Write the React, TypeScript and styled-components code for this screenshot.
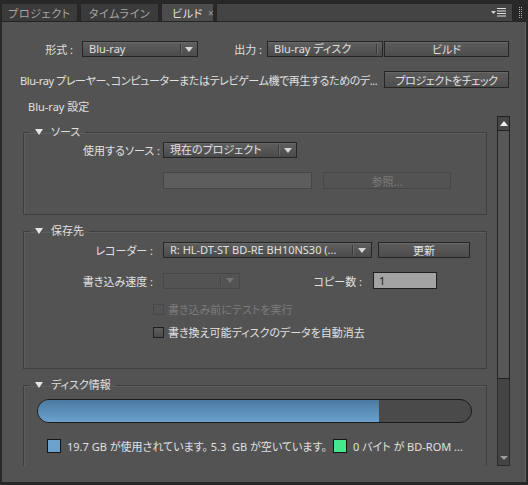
import React from 'react';
import styled, { createGlobalStyle } from 'styled-components';

const GlobalStyle = createGlobalStyle`
  html, body {
    margin: 0;
    padding: 0;
    background: #282828;
  }
  body {
    font-family: "Noto Sans", "Noto Sans CJK JP", sans-serif;
    font-size: 11px;
    font-feature-settings: "palt" 1;
    color: #e0e0e0;
  }
  * {
    box-sizing: border-box;
  }
`;

const Frame = styled.div`
  width: 528px;
  height: 485px;
  display: flex;
  flex-direction: column;
  background: #282828;
  overflow: hidden;
`;

const TabBar = styled.div`
  height: 22px;
  display: flex;
  align-items: flex-end;
  gap: 2px;
  padding-left: 1px;
  border-bottom: 1px solid #252525;
`;

const Tab = styled.div<{ $w: number; $active?: boolean }>`
  width: ${p => p.$w}px;
  height: 18px;
  display: flex;
  align-items: center;
  justify-content: ${p => (p.$active ? 'flex-start' : 'center')};
  padding-left: ${p => (p.$active ? '3px' : '0')};
  gap: 4px;
  background: ${p => (p.$active ? '#4c4c4c' : '#3b3b3b')};
  border: 1px solid #262626;
  border-bottom: none;
  color: ${p => (p.$active ? '#e2e2e2' : '#a6a6a6')};
  letter-spacing: 0.6px;
  white-space: nowrap;
`;

const TabFill = styled.div`
  flex: 1;
  height: 18px;
  display: flex;
  align-items: center;
  justify-content: flex-end;
  padding-right: 6px;
  background: #444444;
  border: 1px solid #262626;
  border-bottom: none;
`;

const Grip = styled.div`
  width: 12px;
  height: 18px;
  display: flex;
  align-items: center;
  justify-content: center;
  margin-right: 1px;
`;

const Close = styled.span`
  color: #9a9a9a;
  font-size: 10px;
  margin-left: 1px;
`;

const Body = styled.div`
  flex: 1;
  margin: 0 2px 3px 2px;
  background: #535353;
  border-right: 1px solid #626262;
  display: flex;
  flex-direction: column;
  padding-left: 18px;
`;

const Row = styled.div<{ $mt: number; $h: number }>`
  display: flex;
  align-items: center;
  margin-top: ${p => p.$mt}px;
  height: ${p => p.$h}px;
  flex-shrink: 0;
`;

const Label = styled.span<{ $w: number; $ml?: number; $mr: number; $dim?: boolean }>`
  width: ${p => p.$w}px;
  margin-left: ${p => p.$ml || 0}px;
  margin-right: ${p => p.$mr}px;
  text-align: right;
  white-space: nowrap;
  flex-shrink: 0;
  color: ${p => (p.$dim ? '#7c7c7c' : '#e0e0e0')};
`;

const SelectBox = styled.div<{ $w: number; $disabled?: boolean }>`
  width: ${p => p.$w}px;
  height: 16px;
  flex-shrink: 0;
  display: flex;
  align-items: stretch;
  border: 1px solid ${p => (p.$disabled ? '#474747' : '#262626')};
  background: ${p => (p.$disabled ? '#535353' : 'linear-gradient(#5f5f5f, #4b4b4b)')};
  box-shadow: ${p => (p.$disabled ? 'none' : 'inset 0 1px 0 #676767')};
  color: #e0e0e0;
`;

const SelectText = styled.span`
  flex: 1;
  padding-left: 6px;
  overflow: hidden;
  white-space: nowrap;
  line-height: 14px;
`;

const SelectArrow = styled.span<{ $w: number; $disabled?: boolean }>`
  width: ${p => p.$w}px;
  flex-shrink: 0;
  display: flex;
  align-items: center;
  justify-content: center;
  border-left: 1px solid ${p => (p.$disabled ? '#464646' : '#3a3a3a')};
  box-shadow: inset 1px 0 0 ${p => (p.$disabled ? '#5a5a5a' : '#6a6a6a')};
  margin: 2px 0;
`;

const Caret = styled.span<{ $disabled?: boolean }>`
  width: 0;
  height: 0;
  border-left: 4px solid transparent;
  border-right: 4px solid transparent;
  border-top: 5px solid ${p => (p.$disabled ? '#747474' : '#d6d6d6')};
`;

const Button = styled.div<{ $w: number; $h: number; $ml?: number; $disabled?: boolean; $tight?: boolean }>`
  width: ${p => p.$w}px;
  height: ${p => p.$h}px;
  margin-left: ${p => p.$ml || 0}px;
  flex-shrink: 0;
  display: flex;
  align-items: center;
  justify-content: center;
  border: 1px solid ${p => (p.$disabled ? '#474747' : '#262626')};
  background: ${p => (p.$disabled ? '#535353' : 'linear-gradient(#5c5c5c, #4d4d4d)')};
  box-shadow: ${p => (p.$disabled ? 'none' : 'inset 0 1px 0 #686868')};
  color: ${p => (p.$disabled ? '#7a7a7a' : '#e2e2e2')};
  letter-spacing: ${p => (p.$tight ? '-0.4px' : '0')};
  white-space: nowrap;
  overflow: hidden;
`;

const Description = styled.span`
  width: 364px;
  flex-shrink: 0;
  white-space: nowrap;
  letter-spacing: -0.4px;
`;

const SettingsTitle = styled.div`
  margin-top: 12px;
  padding-left: 8px;
  line-height: 14px;
  height: 14px;
  flex-shrink: 0;
`;

const ScrollArea = styled.div`
  margin-top: 2px;
  height: 350px;
  flex-shrink: 0;
  display: flex;
  padding-left: 3px;
  gap: 10px;
  overflow: hidden;
`;

const Content = styled.div`
  width: 464px;
  padding-top: 9px;
  display: flex;
  flex-direction: column;
  gap: 9px;
`;

const Group = styled.fieldset<{ $pb: number }>`
  margin: 0;
  padding: 0 0 ${p => p.$pb}px 0;
  min-width: 0;
  border: 1px solid #3e3e3e;
  box-shadow: inset 1px 1px 0 #5e5e5e;
`;

const Legend = styled.legend`
  margin-left: 6px;
  padding: 0 5px;
  line-height: 14px;
  height: 14px;
  display: flex;
  align-items: center;
  gap: 8px;
`;

const LegendCaret = styled.span`
  width: 0;
  height: 0;
  border-left: 4px solid transparent;
  border-right: 4px solid transparent;
  border-top: 6px solid #e6e6e6;
`;

const TextField = styled.div<{ $w: number; $ml: number }>`
  width: ${p => p.$w}px;
  height: 17px;
  margin-left: ${p => p.$ml}px;
  flex-shrink: 0;
  background: #5d5d5d;
  border: 1px solid #464646;
`;

const NumberField = styled.div`
  width: 64px;
  height: 17px;
  flex-shrink: 0;
  background: #a3a3a3;
  border: 1px solid #1f1f1f;
  color: #1a1a1a;
  padding-left: 5px;
  line-height: 15px;
`;

const CheckRow = styled.label<{ $dim?: boolean }>`
  display: flex;
  align-items: center;
  gap: 4px;
  margin-left: 129px;
  color: ${p => (p.$dim ? '#7c7c7c' : '#e0e0e0')};
  white-space: nowrap;
`;

const CheckSquare = styled.span<{ $dim?: boolean }>`
  width: 11px;
  height: 11px;
  flex-shrink: 0;
  border: 1px solid ${p => (p.$dim ? '#474747' : '#1f1f1f')};
  background: ${p => (p.$dim ? '#535353' : 'linear-gradient(#5e5e5e, #4a4a4a)')};
`;

const Meter = styled.div`
  width: 435px;
  height: 24px;
  margin: 7px 0 0 13px;
  border: 1px solid #1b1b1b;
  border-radius: 12px;
  background: #4a4a4a;
  overflow: hidden;
  display: flex;
`;

const MeterFill = styled.div`
  height: 100%;
  background: linear-gradient(#4b7aa1, #6aa1cd);
`;

const KeyRow = styled.div`
  margin: 16px 0 0 23px;
  height: 14px;
  display: flex;
  align-items: center;
  white-space: nowrap;
`;

const KeyText = styled.span`
  white-space: pre;
`;

const Swatch = styled.span<{ $color: string; $ml?: number }>`
  width: 14px;
  height: 14px;
  flex-shrink: 0;
  margin-left: ${p => p.$ml || 0}px;
  margin-right: 6px;
  background: ${p => p.$color};
  border: 1px solid #151515;
`;

const ScrollBar = styled.div`
  width: 13px;
  flex-shrink: 0;
  display: flex;
  flex-direction: column;
`;

const ScrollButton = styled.div`
  height: 15px;
  display: flex;
  align-items: center;
  justify-content: center;
  background: #474747;
  border: 1px solid #222222;
`;

const UpCaret = styled.span`
  width: 0;
  height: 0;
  border-left: 4px solid transparent;
  border-right: 4px solid transparent;
  border-bottom: 5px solid #f0f0f0;
`;

const Thumb = styled.div`
  height: 248px;
  background: #575757;
  border: 1px solid #222222;
  border-top: none;
`;

const Track = styled.div`
  flex: 1;
  background: #444444;
  border-left: 1px solid #2c2c2c;
  border-right: 1px solid #2c2c2c;
  border-bottom: 1px solid #2c2c2c;
  display: flex;
  align-items: flex-end;
  justify-content: center;
  padding-bottom: 5px;
`;

const DownCaret = styled.span`
  width: 0;
  height: 0;
  border-left: 4px solid transparent;
  border-right: 4px solid transparent;
  border-top: 4px solid #9c9c9c;
`;

const Select: React.FC<{ w: number; text?: string; arrowW?: number; noCaret?: boolean; disabled?: boolean }> = ({
  w,
  text,
  arrowW = 17,
  noCaret,
  disabled,
}) => (
  <SelectBox $w={w} $disabled={disabled}>
    <SelectText>{text}</SelectText>
    <SelectArrow $w={arrowW} $disabled={disabled}>
      {!noCaret && <Caret $disabled={disabled} />}
    </SelectArrow>
  </SelectBox>
);

const MenuIcon = () => (
  <svg width="15" height="9" viewBox="0 0 15 9">
    <path d="M0 3h5l-2.5 3z" fill="#d0d0d0" />
    <rect x="6" y="0" width="9" height="1" fill="#e0e0e0" />
    <rect x="6" y="2.5" width="9" height="1" fill="#e0e0e0" />
    <rect x="6" y="5" width="9" height="1" fill="#e0e0e0" />
    <rect x="6" y="7.5" width="9" height="1" fill="#e0e0e0" />
  </svg>
);

const GripDots = () => (
  <svg width="4" height="11" viewBox="0 0 4 11">
    {[0, 2, 4, 6, 8, 10].map(y => (
      <g key={y}>
        <rect x="0" y={y} width="1" height="1" fill="#b0b0b0" />
        <rect x="2" y={y} width="1" height="1" fill="#b0b0b0" />
      </g>
    ))}
  </svg>
);

const App: React.FC = () => {
  const used = 19.7;
  const total = 25;

  return (
    <>
      <GlobalStyle />
      <Frame>
        <TabBar>
          <Tab $w={77}>プロジェクト</Tab>
          <Tab $w={79}>タイムライン</Tab>
          <Tab $w={53} $active>
            <GripDots />
            <span style={{ marginLeft: 3 }}>ビルド</span>
            <Close>×</Close>
          </Tab>
          <TabFill>
            <MenuIcon />
          </TabFill>
          <Grip>
            <GripDots />
          </Grip>
        </TabBar>

        <Body>
          <Row $mt={19} $h={16}>
            <Label $w={53} $mr={9}>形式 :</Label>
            <Select w={116} text="Blu-ray" />
            <Label $w={36} $ml={28} $mr={5}>出力 :</Label>
            <Select w={116} text="Blu-ray ディスク" arrowW={6} noCaret />
            <Button $w={125} $h={16} $ml={1}>ビルド</Button>
          </Row>

          <Row $mt={14} $h={17}>
            <Description>
              Blu-ray プレーヤー、コンピューターまたはテレビゲーム機で再生するためのデ...
            </Description>
            <Button $w={125} $h={17} $tight>プロジェクトをチェック</Button>
          </Row>

          <SettingsTitle>Blu-ray 設定</SettingsTitle>

          <ScrollArea>
            <Content>
              <Group $pb={25}>
                <Legend>
                  <LegendCaret />
                  ソース
                </Legend>
                <Row $mt={3} $h={16}>
                  <Label $w={136} $mr={3}>使用するソース :</Label>
                  <Select w={134} text="現在のプロジェクト" arrowW={18} />
                </Row>
                <Row $mt={14} $h={17}>
                  <TextField $w={149} $ml={139} />
                  <Button $w={128} $h={17} $ml={11} $disabled>参照...</Button>
                </Row>
              </Group>

              <Group $pb={29}>
                <Legend>
                  <LegendCaret />
                  保存先
                </Legend>
                <Row $mt={4} $h={16}>
                  <Label $w={129} $mr={10}>レコーダー :</Label>
                  <Select w={209} text="R: HL-DT-ST BD-RE  BH10NS30 (..." arrowW={19} />
                  <Button $w={92} $h={16} $ml={6}>更新</Button>
                </Row>
                <Row $mt={14} $h={17}>
                  <Label $w={129} $mr={10}>書き込み速度 :</Label>
                  <Select w={77} arrowW={19} disabled />
                  <Label $w={122} $mr={11}>コピー数 :</Label>
                  <NumberField>1</NumberField>
                </Row>
                <Row $mt={13} $h={14}>
                  <CheckRow $dim>
                    <CheckSquare $dim />
                    書き込み前にテストを実行
                  </CheckRow>
                </Row>
                <Row $mt={9} $h={14}>
                  <CheckRow>
                    <CheckSquare />
                    書き換え可能ディスクのデータを自動消去
                  </CheckRow>
                </Row>
              </Group>

              <Group $pb={40}>
                <Legend>
                  <LegendCaret />
                  ディスク情報
                </Legend>
                <Meter>
                  <MeterFill style={{ width: `${(used / total) * 100}%` }} />
                </Meter>
                <KeyRow>
                  <Swatch $color="#6aa1cd" />
                  <KeyText>19.7 GB が使用されています。 5.3  GB が空いています。</KeyText>
                  <Swatch $color="#46e88e" $ml={6} />
                  <KeyText>0 バイト が BD-ROM ...</KeyText>
                </KeyRow>
              </Group>
            </Content>

            <ScrollBar>
              <ScrollButton>
                <UpCaret />
              </ScrollButton>
              <Thumb />
              <Track>
                <DownCaret />
              </Track>
            </ScrollBar>
          </ScrollArea>
        </Body>
      </Frame>
    </>
  );
};

export default App;
